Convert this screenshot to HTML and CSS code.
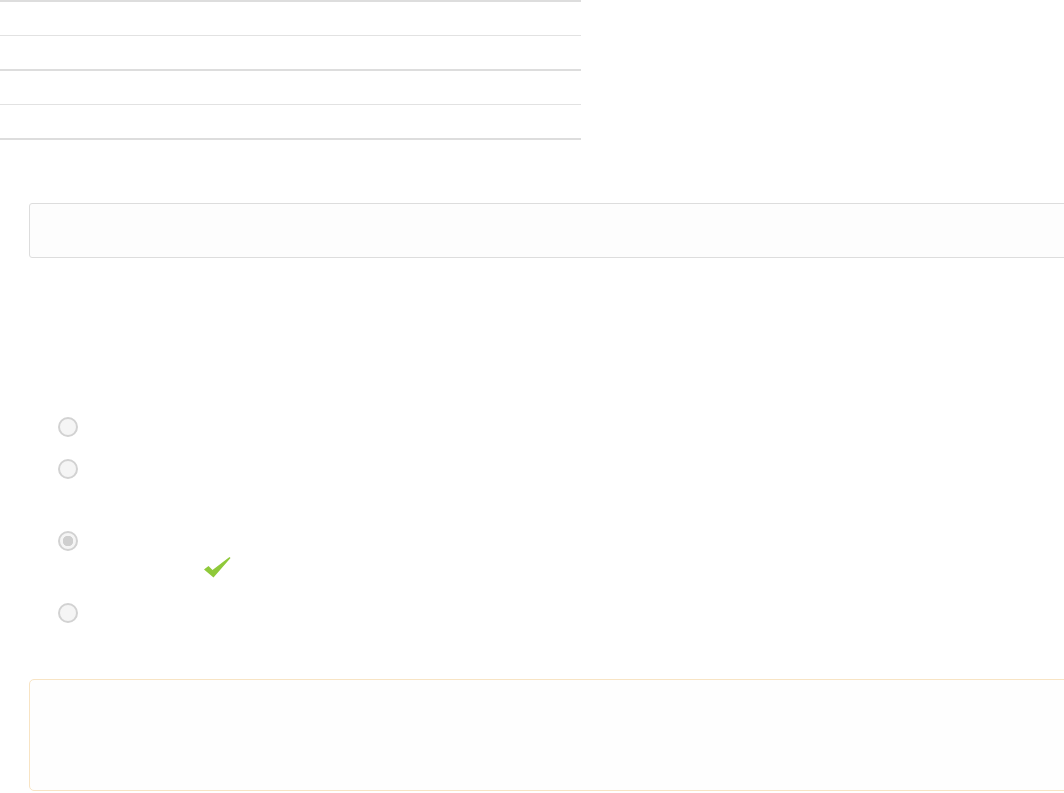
FILE: index.html
```html
<!DOCTYPE html>
<html lang="en">
<head>
    <meta charset="UTF-8">
    <meta name="viewport" content="width=device-width, initial-scale=1.0">
    <title>Quiz</title>
    <link rel="stylesheet" href="styles.css">
</head>
<body>
    <div class="summary">
        <div class="summary-row thin"></div>
        <div class="summary-row"></div>
        <div class="summary-row thin"></div>
        <div class="summary-row"></div>
    </div>

    <div class="content">
        <div class="answer-field"></div>

        <div class="options">
            <label class="option">
                <input type="radio" name="q1" disabled>
            </label>
            <label class="option tall">
                <input type="radio" name="q1" disabled>
            </label>
            <label class="option tall">
                <input type="radio" name="q1" checked disabled>
                <span class="correct">
                    <svg width="27" height="21" viewBox="0 0 27 21">
                        <path d="M0 12.5 L4.5 9 L8.5 13 L25.5 0 L26.5 1 L9.5 20.5 Z" fill="#8fc93a"/>
                    </svg>
                </span>
            </label>
            <label class="option">
                <input type="radio" name="q1" disabled>
            </label>
        </div>

        <div class="feedback"></div>
    </div>
</body>
</html>
```

FILE: styles.css
```css
/* Base */
html {
    overflow: hidden;
}

body {
    font-family: "Liberation Sans", Arial, sans-serif;
    margin: 0;
    background-color: #ffffff;
    color: #333333;
}

/* Summary table */
.summary {
    width: 581px;
    border-top: 2px solid #dddddd;
}

.summary-row {
    height: 33px;
    border-bottom: 2px solid #dddddd;
}

.summary-row.thin {
    border-bottom: 1px solid #e2e2e2;
}

/* Question block */
.content {
    margin: 63px -60px 0 29px;
}

.answer-field {
    height: 53px;
    border: 1px solid #dddddd;
    border-radius: 3px;
    background-color: #fdfdfd;
}

.options {
    margin-top: 159px;
}

.option {
    display: block;
    height: 42px;
    padding-left: 29px;
}

.option.tall {
    height: 72px;
}

.option input {
    appearance: none;
    -webkit-appearance: none;
    display: block;
    margin: 0;
    width: 20px;
    height: 20px;
    border: 2px solid #d2d2d2;
    border-radius: 50%;
    background-color: #f5f5f5;
    box-sizing: border-box;
}

.option input:checked {
    background: radial-gradient(circle, #cfcfcf 0 5px, #f5f5f5 5.5px);
}

.correct {
    display: block;
    margin: 6px 0 0 146px;
    height: 21px;
}

.correct svg {
    display: block;
}

/* Feedback */
.feedback {
    margin-top: 34px;
    height: 110px;
    border: 1px solid #f8e4c4;
    border-radius: 5px;
    background-color: #fefefe;
}
```
